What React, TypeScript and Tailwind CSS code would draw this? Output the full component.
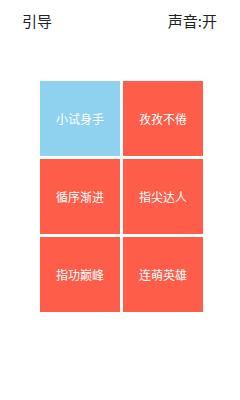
import React from 'react';

const levels = [
  { name: '小试身手', color: 'bg-[#8fd2f0]' },
  { name: '孜孜不倦', color: 'bg-[#fe5d4a]' },
  { name: '循序渐进', color: 'bg-[#fe5d4a]' },
  { name: '指尖达人', color: 'bg-[#fe5d4a]' },
  { name: '指功巅峰', color: 'bg-[#fe5d4a]' },
  { name: '连萌英雄', color: 'bg-[#fe5d4a]' },
];

const App: React.FC = () => {
  return (
    <div
      className="w-[240px] h-[400px] bg-white"
      style={{ fontFamily: '"Noto Sans CJK SC", "Noto Sans", sans-serif' }}
    >
      <div className="flex justify-between items-center h-[42px] pl-[22px] pr-[23px] text-[15px] text-[#222]">
        <span>引导</span>
        <span>声音:开</span>
      </div>
      <div className="grid grid-cols-[80px_80px] grid-rows-[75px_75px_75px] gap-[3px] ml-[40px] mt-[39px]">
        {levels.map((lv) => (
          <div
            key={lv.name}
            className={`${lv.color} flex items-center justify-center text-white text-[12px]`}
          >
            {lv.name}
          </div>
        ))}
      </div>
    </div>
  );
};

export default App;
